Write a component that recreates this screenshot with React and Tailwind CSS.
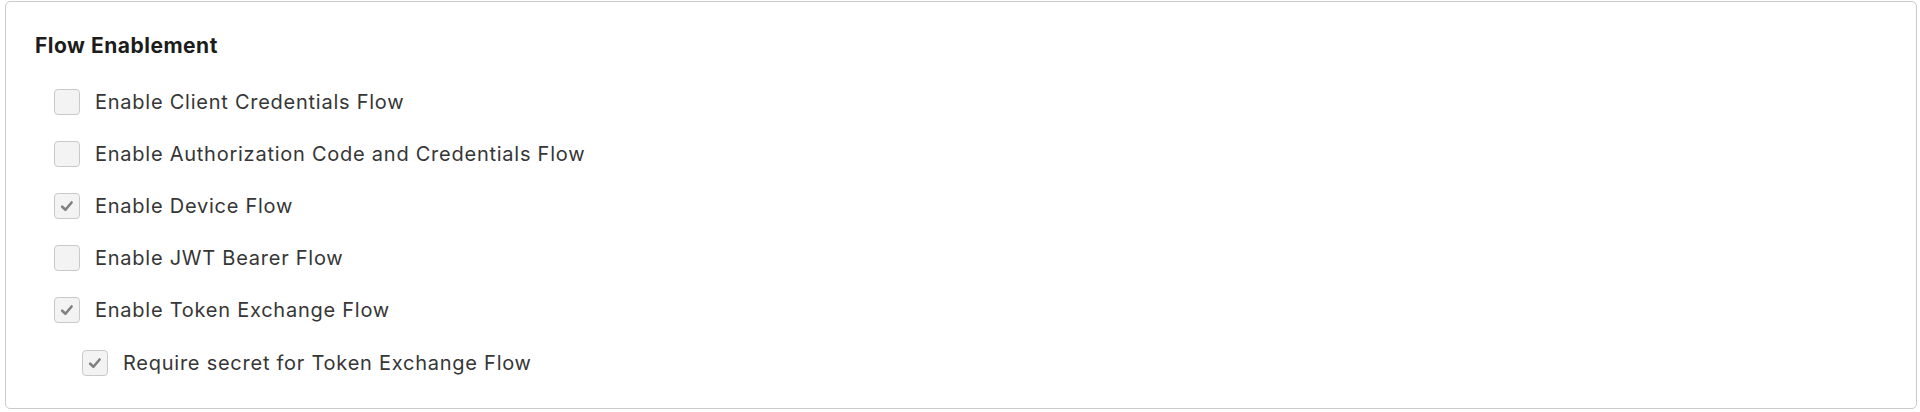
import { useState } from "react";

const flows = [
  { id: "client", label: "Enable Client Credentials Flow", checked: false },
  { id: "authCode", label: "Enable Authorization Code and Credentials Flow", checked: false },
  { id: "device", label: "Enable Device Flow", checked: true },
  { id: "jwt", label: "Enable JWT Bearer Flow", checked: false },
  { id: "tokenExchange", label: "Enable Token Exchange Flow", checked: true },
  { id: "tokenSecret", label: "Require secret for Token Exchange Flow", checked: true, nested: true },
];

const CheckBox = ({ checked, onClick }) => (
  <span
    onClick={onClick}
    className="flex items-center justify-center w-[26px] h-[26px] shrink-0 rounded-[4px] border border-[#c9c9c9] bg-[#f3f3f3] cursor-default"
  >
    {checked && (
      <svg width="26" height="26" viewBox="0 0 26 26" fill="none">
        <path
          d="M7.8 13.8 L11.3 17.1 L18 9.2"
          stroke="#808080"
          strokeWidth="2.8"
          strokeLinecap="round"
          strokeLinejoin="round"
        />
      </svg>
    )}
  </span>
);

const App = () => {
  const [values, setValues] = useState(
    Object.fromEntries(flows.map((f) => [f.id, f.checked]))
  );

  const toggle = (id) => {
    setValues((prev) => ({ ...prev, [id]: !prev[id] }));
  };

  return (
    <div className="w-[1920px] h-[412px] bg-white pt-[1px] pl-[5px] pr-[3px] font-['Inter',sans-serif]">
      <div className="h-[408px] rounded-[5px] border border-[#cbcbcb] pl-[29px] pt-[32px]">
        <h2 className="text-[21px] leading-[24px] font-bold tracking-[0.5px] text-[#1c1c1c]">
          Flow Enablement
        </h2>

        <ul className="mt-[18px] flex flex-col pl-[19px]">
          {flows.map((flow) => (
            <li
              key={flow.id}
              className={`flex items-center gap-[15px] h-[52px] ${
                flow.nested ? "pl-[28px] pt-[1px]" : ""
              }`}
            >
              <CheckBox checked={values[flow.id]} onClick={() => toggle(flow.id)} />
              <span className="text-[20px] tracking-[0.75px] text-[#363636]">
                {flow.label}
              </span>
            </li>
          ))}
        </ul>
      </div>
    </div>
  );
};

export default App;
